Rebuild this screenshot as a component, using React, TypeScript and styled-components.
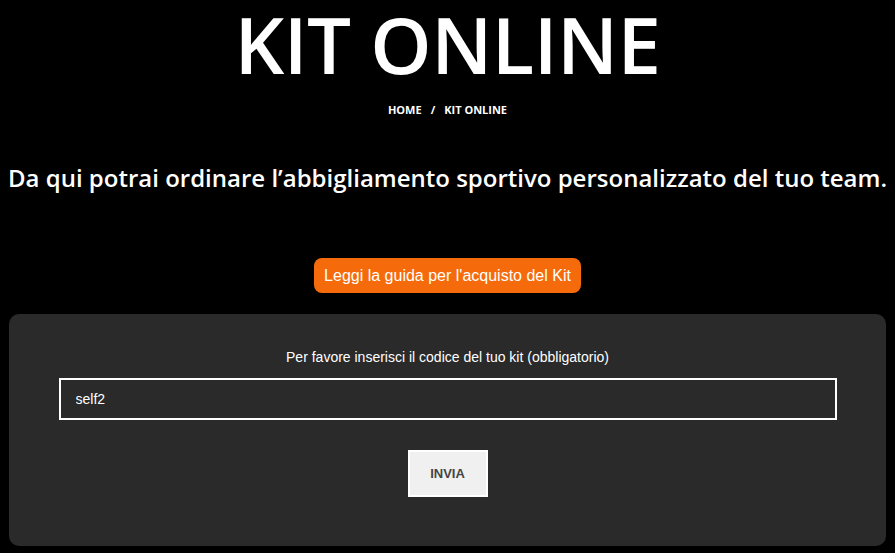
import styled, { createGlobalStyle } from 'styled-components'

const GlobalStyle = createGlobalStyle`
  html, body {
    margin: 0;
    padding: 0;
    background: #000;
  }
  * {
    box-sizing: border-box;
  }
`

const Page = styled.div`
  width: 895px;
  height: 553px;
  background: #000;
  display: flex;
  flex-direction: column;
  align-items: center;
  padding: 0 9px;
  overflow: hidden;
`

const Title = styled.h1`
  margin: 0;
  font-family: 'Open Sans', sans-serif;
  font-weight: 600;
  font-size: 78px;
  line-height: 89px;
  color: #fff;
  letter-spacing: -0.5px;
  white-space: nowrap;
`

const Crumbs = styled.div`
  margin-top: 13px;
  font-family: 'Open Sans', sans-serif;
  font-weight: 700;
  font-size: 11px;
  line-height: 16px;
  color: #fff;
  display: flex;
  gap: 9px;
`

const Lead = styled.h2`
  margin: 45px 0 0;
  font-family: 'Open Sans', sans-serif;
  font-weight: 600;
  font-size: 24px;
  line-height: 30px;
  color: #fff;
  white-space: nowrap;
`

const GuideButton = styled.a`
  margin-top: 65px;
  display: inline-flex;
  align-items: center;
  height: 35px;
  padding: 0 10px;
  background: #f56b0b;
  border-radius: 8px;
  color: #fff;
  font-family: 'Liberation Sans', Arial, sans-serif;
  font-size: 16px;
  text-decoration: none;
`

const Panel = styled.form`
  margin-top: 21px;
  width: 877px;
  height: 232px;
  flex-shrink: 0;
  background: #2a2a2a;
  border-radius: 10px;
  display: flex;
  flex-direction: column;
  align-items: center;
  padding: 35px 50px 0;
`

const Label = styled.label`
  font-family: 'Liberation Sans', Arial, sans-serif;
  font-size: 14px;
  line-height: 16px;
  color: #fff;
`

const CodeInput = styled.input`
  margin-top: 13px;
  width: 778px;
  height: 42px;
  border: 2px solid #fff;
  background: transparent;
  color: #fff;
  font-family: 'Liberation Sans', Arial, sans-serif;
  font-size: 14px;
  padding: 0 15px;
  outline: none;
`

const Submit = styled.button`
  margin-top: 30px;
  width: 80px;
  height: 47px;
  background: #f0f0f0;
  border: 2px solid #fff;
  color: #444;
  font-family: 'Liberation Sans', Arial, sans-serif;
  font-weight: 700;
  font-size: 13px;
  cursor: pointer;
`

export default function App() {
  return (
    <>
      <GlobalStyle />
      <Page>
        <Title>KIT ONLINE</Title>
        <Crumbs>
          <span>HOME</span>
          <span>/</span>
          <span>KIT ONLINE</span>
        </Crumbs>
        <Lead>Da qui potrai ordinare l’abbigliamento sportivo personalizzato del tuo team.</Lead>
        <GuideButton href="#">Leggi la guida per l'acquisto del Kit</GuideButton>
        <Panel onSubmit={(e) => e.preventDefault()}>
          <Label htmlFor="kit-code">Per favore inserisci il codice del tuo kit (obbligatorio)</Label>
          <CodeInput id="kit-code" defaultValue="self2" />
          <Submit type="submit">INVIA</Submit>
        </Panel>
      </Page>
    </>
  )
}
